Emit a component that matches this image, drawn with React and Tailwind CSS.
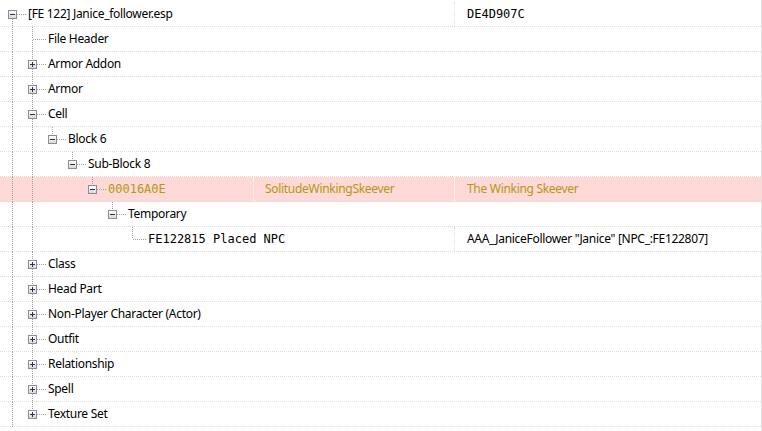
const rows = [
  { level: 0, label: "[FE 122] Janice_follower.esp", toggle: "minus", guides: [], up: false, down: true, col3: "DE4D907C", col3Mono: true },
  { level: 1, label: "File Header", guides: [0], up: true, down: true },
  { level: 1, label: "Armor Addon", toggle: "plus", guides: [0], up: true, down: true },
  { level: 1, label: "Armor", toggle: "plus", guides: [0], up: true, down: true },
  { level: 1, label: "Cell", toggle: "minus", guides: [0], up: true, down: true },
  { level: 2, label: "Block 6", toggle: "minus", guides: [0, 1], up: true },
  { level: 3, label: "Sub-Block 8", toggle: "minus", guides: [0, 1], up: true },
  {
    level: 4,
    label: "00016A0E",
    mono: true,
    toggle: "minus",
    guides: [0, 1],
    up: true,
    col2: "SolitudeWinkingSkeever",
    col3: "The Winking Skeever",
    conflict: true,
  },
  { level: 5, label: "Temporary", toggle: "minus", guides: [0, 1], up: true },
  {
    level: 6,
    label: "FE122815 Placed NPC",
    mono: true,
    guides: [0, 1],
    up: true,
    col3: 'AAA_JaniceFollower "Janice" [NPC_:FE122807]',
  },
  { level: 1, label: "Class", toggle: "plus", guides: [0], up: true, down: true },
  { level: 1, label: "Head Part", toggle: "plus", guides: [0], up: true, down: true },
  { level: 1, label: "Non-Player Character (Actor)", toggle: "plus", guides: [0], up: true, down: true },
  { level: 1, label: "Outfit", toggle: "plus", guides: [0], up: true, down: true },
  { level: 1, label: "Relationship", toggle: "plus", guides: [0], up: true, down: true },
  { level: 1, label: "Spell", toggle: "plus", guides: [0], up: true, down: true },
  { level: 1, label: "Texture Set", toggle: "plus", guides: [0], up: true },
];

const LINE = "#a0a0a0";
const MONO = "font-['DejaVu_Sans_Mono',monospace] text-[12px] tracking-normal";

function TreeLines({ level, guides, up, down, toggle }) {
  const w = 28 + level * 20;
  const cx = 12.5 + level * 20;
  return (
    <svg width={w} height={25} className="shrink-0 self-start" shapeRendering="crispEdges">
      <defs>
        <linearGradient id="boxfill" x1="0" y1="0" x2="0" y2="1">
          <stop offset="0" stopColor="#ffffff" />
          <stop offset="1" stopColor="#d6d6d6" />
        </linearGradient>
      </defs>
      {guides.map((g) => (
        <line key={g} x1={12.5 + g * 20} x2={12.5 + g * 20} y1={0} y2={25} stroke={LINE} strokeDasharray="1 1" />
      ))}
      {up && <line x1={cx} x2={cx} y1={0} y2={12} stroke={LINE} strokeDasharray="1 1" />}
      {down && <line x1={cx} x2={cx} y1={13} y2={25} stroke={LINE} strokeDasharray="1 1" />}
      <line x1={cx} x2={cx + 13} y1={12.5} y2={12.5} stroke={LINE} strokeDasharray="1 1" />
      {toggle && (
        <g>
          <rect x={cx - 4} y={8.5} width={8} height={8} fill="url(#boxfill)" stroke="#8e8e8e" />
          <line x1={cx - 2.5} x2={cx + 2.5} y1={12.5} y2={12.5} stroke="#22345c" />
          {toggle === "plus" && <line x1={cx} x2={cx} y1={10} y2={15} stroke="#22345c" />}
        </g>
      )}
    </svg>
  );
}

function Row({ row }) {
  const textColor = row.conflict ? "text-[#b09a10]" : "text-black";
  const sep = row.conflict ? "border-white" : "border-[#dcdcdc]";
  return (
    <div
      className={`flex h-[25px] border-b border-dotted border-[#dcdcdc] ${
        row.conflict ? "bg-[#ffd8d8]" : ""
      } ${textColor}`}
    >
      <div className="flex w-[253px] shrink-0 items-center">
        <TreeLines {...row} />
        <span className={`whitespace-pre ${row.mono ? MONO : ""}`}>{row.label}</span>
      </div>
      <div className={`flex w-[201px] shrink-0 items-center pl-[11px] ${row.col2 ? `border-l border-dotted ${sep}` : ""}`}>
        {row.col2}
      </div>
      <div className={`flex flex-1 items-center pl-[12px] ${row.col3 ? `border-l border-dotted ${sep}` : ""}`}>
        <span className={`whitespace-pre ${row.col3Mono ? MONO : ""}`}>{row.col3}</span>
      </div>
    </div>
  );
}

export default function App() {
  return (
    <div className="h-[431px] w-[762px] overflow-hidden bg-white font-['Noto_Sans',sans-serif] text-[12px] leading-none tracking-[-0.3px]">
      <div className="h-full border-r border-[#e3e3e3] pt-[2px]">
        {rows.map((row, i) => (
          <Row key={i} row={row} />
        ))}
      </div>
    </div>
  );
}
